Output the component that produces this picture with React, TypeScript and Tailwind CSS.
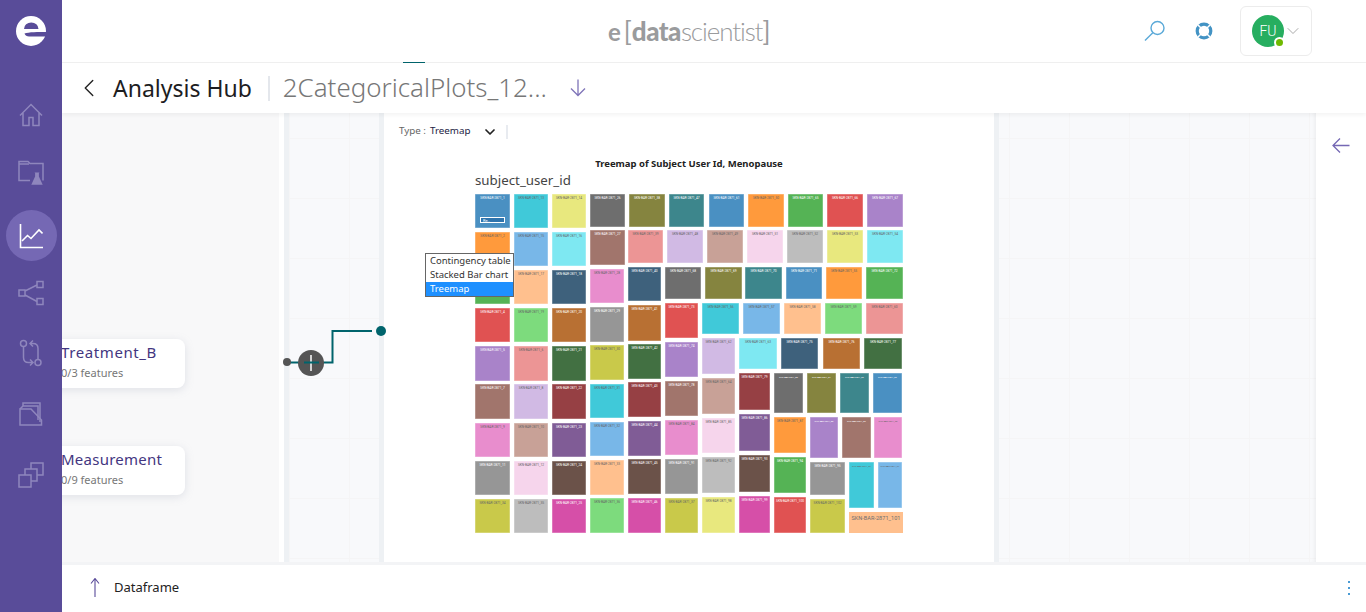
import { ChevronDown, ChevronLeft } from "lucide-react";

type Cell = [number, number, number, number, string, string];

const DARK = new Set(["#4a90c2", "#6e6e6e", "#85843f", "#3d868c", "#55b355", "#e05252", "#a983c9", "#a1756c", "#3e617c", "#b87033", "#427042", "#964044", "#805c96", "#6b5249", "#d64fa8", "#969696"]);

// x1, x2, y1, y2, colour, label suffix
const cells: Cell[] = [
  [475, 510, 194, 228, "#4a90c2", "1"], [514, 548, 194, 228, "#40c9d9", "13"], [552, 586, 194, 228, "#e8e87e", "14"], [590, 625, 194, 227, "#6e6e6e", "26"], [629, 665, 194, 227, "#85843f", "38"],
  [669, 704, 194, 227, "#3d868c", "47"], [709, 744, 194, 227, "#4a90c2", "61"], [748, 784, 194, 227, "#ff9a3c", "50"], [788, 823, 194, 227, "#55b355", "65"], [827, 863, 194, 227, "#e05252", "66"], [867, 903, 194, 227, "#a983c9", "67"],
  [475, 510, 232, 266, "#ff9a3c", "2"], [514, 548, 232, 266, "#78b7e8", "15"], [552, 586, 232, 266, "#7ee8f2", "16"], [590, 625, 230, 265, "#a1756c", "27"], [628, 663, 230, 263, "#ec9595", "39"],
  [667, 703, 230, 263, "#d1bae4", "48"], [707, 743, 230, 263, "#c8a197", "49"], [747, 783, 230, 263, "#f6d5ec", "51"], [787, 823, 230, 263, "#bdbdbd", "52"], [827, 863, 230, 263, "#e8e87e", "53"], [867, 903, 230, 263, "#7ee8f2", "54"],
  [475, 510, 270, 304, "#55b355", "3"], [514, 548, 270, 304, "#ffc08e", "17"], [552, 586, 270, 304, "#3e617c", "18"], [590, 624, 269, 303, "#e88dcd", "28"], [628, 661, 267, 301, "#3e617c", "40"],
  [665, 701, 267, 299, "#6e6e6e", "68"], [705, 742, 267, 299, "#85843f", "69"], [745, 782, 267, 299, "#3d868c", "70"], [786, 822, 267, 299, "#4a90c2", "71"], [826, 862, 267, 299, "#ff9a3c", "55"], [866, 903, 267, 299, "#55b355", "72"],
  [475, 510, 308, 342, "#e05252", "4"], [514, 548, 308, 342, "#7ddb7d", "19"], [552, 586, 308, 342, "#b87033", "20"], [590, 624, 307, 342, "#969696", "29"], [628, 661, 305, 341, "#b87033", "41"],
  [665, 698, 303, 338, "#e05252", "73"], [702, 739, 303, 334, "#40c9d9", "56"], [743, 780, 303, 334, "#78b7e8", "57"], [784, 821, 303, 334, "#ffc08e", "58"], [825, 862, 303, 334, "#7ddb7d", "59"], [866, 903, 303, 334, "#ec9595", "60"],
  [475, 510, 346, 381, "#a983c9", "5"], [514, 548, 346, 381, "#ec9595", "6"], [552, 586, 346, 381, "#427042", "21"], [590, 624, 345, 380, "#c9c94a", "30"], [628, 661, 344, 379, "#427042", "42"],
  [665, 698, 342, 377, "#a983c9", "74"], [702, 735, 338, 374, "#d1bae4", "62"], [739, 777, 338, 369, "#7ee8f2", "63"], [781, 818, 338, 369, "#3e617c", "75"], [823, 860, 338, 369, "#b87033", "76"], [864, 902, 338, 369, "#427042", "77"],
  [475, 510, 384, 419, "#a1756c", "7"], [514, 548, 384, 419, "#d1bae4", "8"], [552, 586, 384, 419, "#964044", "22"], [590, 624, 384, 418, "#40c9d9", "31"], [628, 661, 382, 417, "#964044", "43"],
  [665, 698, 381, 416, "#a1756c", "78"], [702, 735, 378, 414, "#c8a197", "64"], [739, 770, 373, 410, "#964044", "79"], [774, 803, 373, 413, "#6e6e6e", "80"], [807, 836, 373, 413, "#85843f", "81"], [840, 869, 373, 413, "#3d868c", "82"], [873, 902, 373, 413, "#4a90c2", "83"],
  [475, 510, 423, 457, "#e88dcd", "9"], [514, 548, 423, 457, "#c8a197", "10"], [552, 586, 423, 457, "#805c96", "23"], [590, 624, 422, 456, "#78b7e8", "32"], [628, 661, 421, 456, "#805c96", "44"],
  [665, 698, 420, 455, "#e88dcd", "84"], [702, 735, 418, 453, "#f6d5ec", "85"], [739, 770, 414, 451, "#805c96", "86"], [774, 806, 417, 453, "#ff9a3c", "87"], [810, 838, 417, 458, "#a983c9", "88"], [842, 871, 417, 458, "#a1756c", "89"], [874, 902, 417, 458, "#e88dcd", "90"],
  [475, 510, 461, 495, "#969696", "11"], [514, 548, 461, 495, "#f6d5ec", "12"], [552, 586, 461, 495, "#6b5249", "24"], [590, 624, 460, 495, "#ffc08e", "33"], [628, 661, 459, 494, "#6b5249", "45"],
  [665, 698, 459, 494, "#969696", "91"], [702, 735, 457, 493, "#bdbdbd", "92"], [739, 770, 455, 492, "#6b5249", "93"], [774, 806, 457, 493, "#55b355", "94"], [810, 845, 462, 495, "#969696", "95"], [849, 874, 462, 508, "#40c9d9", "96"], [878, 902, 462, 508, "#78b7e8", "97"],
  [475, 510, 499, 533, "#c9c94a", "34"], [514, 548, 499, 533, "#bdbdbd", "35"], [552, 586, 499, 533, "#d64fa8", "25"], [590, 624, 498, 533, "#7ddb7d", "36"], [628, 661, 498, 533, "#d64fa8", "46"],
  [665, 698, 498, 533, "#c9c94a", "37"], [702, 735, 497, 533, "#e8e87e", "98"], [739, 770, 496, 533, "#d64fa8", "99"], [774, 806, 497, 533, "#e05252", "100"], [810, 845, 499, 533, "#c9c94a", "102"],
];

function Treemap() {
  return (
    <svg width="429" height="340" viewBox="475 194 429 340" className="block">
      {cells.map(([x1, x2, y1, y2, fill, id]) => (
        <g key={id}>
          <rect x={x1} y={y1} width={x2 - x1} height={y2 - y1} fill={fill} stroke="#ffffff" strokeOpacity="0.45" strokeWidth="1" />
          {id !== "3" && (
            <text x={(x1 + x2) / 2} y={y1 + 4.5} textAnchor="middle" fontSize={x2 - x1 < 30 ? 2.3 : 3.2} fontFamily="Roboto, sans-serif" fill={DARK.has(fill) ? "#ffffff" : "#666666"}>
              SKN-BAR-2871_{id}
            </text>
          )}
        </g>
      ))}
      <rect x="849" y="512" width="54" height="21" fill="#ffc08e" />
      <text x="876" y="519.5" textAnchor="middle" fontSize="5.6" fontFamily="Roboto, sans-serif" fill="#6f6f6f">SKN-BAR-2871_101</text>
      <rect x="480.5" y="217.5" width="24" height="5" fill="#2f74ad" stroke="#ffffff" />
      <text x="483" y="222" fontSize="4" fontFamily="Roboto, sans-serif" fill="#ffffff">Re..</text>
    </svg>
  );
}

const iconCls = "stroke-[#8f86bd] fill-none";

function NavIcons() {
  return (
    <div className="flex flex-col items-center">
      <button className="flex h-[58px] w-[51px] items-center justify-center">
        <svg width="24" height="24" viewBox="0 0 24 24" className={iconCls} strokeWidth="1.5">
          <path d="M1 12.5 12 1.5 23 12.5M4 10v12.5h6v-8h4v8h6V10" />
        </svg>
      </button>
      <button className="flex h-[58px] w-[51px] items-center justify-center">
        <svg width="26" height="26" viewBox="0 0 26 26" className={iconCls} strokeWidth="1.5">
          <path d="M12 20.5H1V1.5h9l2 2h13v17" />
          <path d="M1 4h10" />
          <path d="M16.5 12.5h5l-.6.8v3.2l3.8 8.2H13.300l3.800-8.200v-3.200z" fill="#8f86bd" stroke="none" />
        </svg>
      </button>
      <button className="mt-[8px] flex h-[51px] w-[51px] items-center justify-center rounded-full bg-[#7568b4]">
        <svg width="24" height="26" viewBox="0 0 24 26" className="fill-none stroke-white" strokeWidth="1.6">
          <path d="M1.5 1v23.5H24" />
          <path d="M3 18l5.5-5.5 3.5 3L20 7l3.5 3.5" />
        </svg>
      </button>
      <button className="mt-[2px] flex h-[60px] w-[51px] items-center justify-center">
        <svg width="26" height="26" viewBox="0 0 26 26" className={iconCls} strokeWidth="1.5">
          <rect x="1" y="10" width="6" height="6" />
          <rect x="19" y="1.5" width="6" height="6" />
          <rect x="19" y="18.5" width="6" height="6" />
          <path d="M7 11 19 5M7 15l12 6.5" />
        </svg>
      </button>
      <button className="flex h-[60px] w-[51px] items-center justify-center">
        <svg width="24" height="28" viewBox="0 0 24 28" className={iconCls} strokeWidth="1.5">
          <circle cx="4.5" cy="4.5" r="3" />
          <circle cx="19" cy="23.5" r="3" />
          <path d="M4.5 7.5v11c0 3 1.5 5 5 5h4M11 20.5l3 3-3 3" />
          <path d="M19 20.5v-11c0-3-1.500-5-5-5h-3M14 1.500l-3 3 3 3" />
        </svg>
      </button>
      <button className="flex h-[61px] w-[51px] items-center justify-center">
        <svg width="24" height="24" viewBox="0 0 24 24" className={iconCls} strokeWidth="1.5">
          <path d="M1 7h11l10.5 11v5H1z" />
          <path d="M1 7l3-3h15v14M4 4V1h17v19" />
        </svg>
      </button>
      <button className="flex h-[61px] w-[51px] items-center justify-center">
        <svg width="26" height="26" viewBox="0 0 26 26" className={iconCls} strokeWidth="1.5">
          <rect x="1" y="13" width="12" height="12" />
          <path d="M7 13V7h12v12h-6" />
          <path d="M13 7V1h12v12h-6" />
        </svg>
      </button>
    </div>
  );
}

function Sidebar() {
  return (
    <aside className="relative z-20 flex h-[612px] w-[62px] shrink-0 flex-col items-center bg-[#594c99]">
      <div className="flex h-[86px] w-full items-start justify-center pt-4">
        <svg width="30" height="30" viewBox="0 0 30 30">
          <circle cx="15" cy="15" r="15" fill="#ffffff" />
          <path d="M8 13a7.2 6.5 0 0 1 14.5 0z" fill="#594c99" />
          <path d="M8.5 17.5c4-1.5 14-1.5 21.5-1.5v4.5H13c-2 0-4-1-4.5-3z" fill="#594c99" />
        </svg>
      </div>
      <NavIcons />
    </aside>
  );
}

function TopBar() {
  return (
    <header className="relative z-10 flex h-[63px] shrink-0 items-center border-b border-[#f0f0f0] bg-white">
      <div className="absolute bottom-[-1px] left-[341px] h-px w-[22px] bg-[#00646c]" />
      <div className="ml-[546px] flex w-[160px] items-baseline whitespace-nowrap font-['Lato',sans-serif] text-[26px] leading-none text-[#9a9b9d]">
        <span className="text-[24px] font-bold">e</span>
        <span className="ml-[3px] font-normal">[</span>
        <span className="font-black tracking-[-0.5px]">data</span>
        <span className="font-light tracking-[-1.1px]">scientist</span>
        <span className="font-normal">]</span>
      </div>
      <svg width="22" height="22" viewBox="0 0 22 22" className="ml-[376px] fill-none stroke-[#5aa9d8]" strokeWidth="1.4">
        <circle cx="13.5" cy="8" r="6.5" />
        <path d="M8.8 12.8 1 20.5" />
      </svg>
      <svg width="18" height="18" viewBox="0 0 18 18" className="ml-[29px] fill-none stroke-[#4393c4]">
        <circle cx="9" cy="9" r="6.8" strokeWidth="3.2" />
        <path d="M3 3 6 6M15 3 12 6M3 15 6 12M15 15 12 12" stroke="#ffffff" strokeWidth="1.5" />
      </svg>
      <div className="ml-[27px] flex h-[50px] w-[72px] items-center rounded-md border border-[#ececec] pl-[11px]">
        <div className="relative flex h-8 w-8 items-center justify-center rounded-full bg-[#27ae60] font-['Roboto',sans-serif] text-sm font-light text-white">
          FU
          <span className="absolute bottom-[-1px] right-[-1px] h-[11px] w-[11px] rounded-full border-2 border-white bg-[#6fb900]" />
        </div>
        <ChevronDown size={20} strokeWidth={1} className="ml-[-1px] text-[#999999]" />
      </div>
    </header>
  );
}

function SubBar() {
  return (
    <div className="relative z-10 flex h-[50px] shrink-0 items-center bg-white shadow-[0_2px_4px_rgba(0,0,0,0.05)]">
      <ChevronLeft size={30} strokeWidth={1.1} className="ml-[12px] text-[#222222]" />
      <h1 className="ml-[9px] font-['Noto_Sans',sans-serif] text-[23px] leading-none text-[#1d1d1f]">Analysis Hub</h1>
      <div className="ml-[16px] h-[25px] w-[2px] bg-[#e4e7ec]" />
      <span className="ml-[13px] font-['Noto_Sans',sans-serif] text-[25.9px] font-light leading-none text-[#777777]">2CategoricalPlots_12...</span>
      <svg width="16" height="18" viewBox="0 0 16 18" className="ml-[23px] fill-none stroke-[#7f74b8]" strokeWidth="1.3">
        <path d="M8 0.5V16.5M1 9.5l7 7 7-7" />
      </svg>
    </div>
  );
}

function NodeCard({ title, sub, tracking }: { title: string; sub: string; tracking: string }) {
  return (
    <div className="ml-[-20px] flex h-[49px] w-[143px] flex-col rounded-lg bg-white pl-[19px] pt-[3px] shadow-[0_2px_8px_rgba(150,160,180,0.25)]">
      <div className={`font-['Noto_Sans',sans-serif] text-[15px] leading-[20px] text-[#43367f] ${tracking}`}>{title}</div>
      <div className="mt-[3px] font-['Noto_Sans',sans-serif] text-[11px] leading-[16px] text-[#777777]">{sub}</div>
    </div>
  );
}

const grid = "bg-[#f8f9fb] bg-[linear-gradient(to_right,#f5f5f6_1px,transparent_1px),linear-gradient(to_bottom,#f5f5f6_1px,transparent_1px)] bg-[size:60px_60px]";

function Workspace() {
  return (
    <main className="flex min-h-0 flex-1">
      <div className="flex w-[217px] shrink-0 flex-col gap-[58px] bg-[#f8f8f9] pt-[226px]">
        <NodeCard title="Treatment_B" sub="0/3 features" tracking="tracking-[0.6px]" />
        <NodeCard title="Measurement" sub="0/9 features" tracking="tracking-[0.25px]" />
      </div>
      <div className="w-[5px] shrink-0 bg-white" />
      <div className={`relative w-[100px] shrink-0 border-x-[5px] border-[#eef1f4] ${grid} bg-[position:0px_25px]`}>
        <svg width="110" height="60" viewBox="0 0 110 60" className="absolute left-[-7px] top-[205px] z-10 overflow-visible">
          <path d="M8 44.5H50.5V13H90" fill="none" stroke="#00646c" strokeWidth="2" />
          <circle cx="5" cy="44" r="4" fill="#555555" />
          <circle cx="29" cy="45" r="13" fill="#555555" />
          <path d="M29 37v16" stroke="#ffffff" strokeWidth="1.5" />
          <path d="M22 44.5h15" stroke="#00646c" strokeWidth="2" />
          <circle cx="99" cy="13" r="5" fill="#00646c" />
        </svg>
      </div>
      <section className="relative w-[610px] shrink-0 bg-white">
        <div className="flex h-[36px] items-center pl-[15px] pt-[1px] font-['Noto_Sans',sans-serif] text-[9.8px]">
          <span className="text-[#666666]">Type :</span>
          <span className="ml-[4px] text-[#222244]">Treemap</span>
          <ChevronDown size={16} strokeWidth={2.6} className="ml-[11px] text-[#222222]" />
          <div className="ml-[8px] h-[14px] w-[2px] bg-[#e8ebf0]" />
        </div>
        <h2 className="mt-[8px] text-center font-['Noto_Sans',sans-serif] text-[9.5px] font-bold leading-[14px] text-[#222222]">
          Treemap of Subject User Id, Menopause
        </h2>
        <div className="ml-[91px] mt-[-1px] font-['Noto_Sans',sans-serif] text-[13.3px] leading-[20px] text-[#444444]">subject_user_id</div>
        <div className="ml-[91px] mt-[4px]">
          <Treemap />
        </div>
        <ul className="absolute left-[41px] top-[140px] z-10 w-[89px] border border-[#666666] bg-white font-['Noto_Sans',sans-serif] text-[9.5px] leading-[14px] text-[#333333]">
          <li className="pl-[4px]">Contingency table</li>
          <li className="pl-[4px]">Stacked Bar chart</li>
          <li className="bg-[#1e90ff] pl-[4px] text-white">Treemap</li>
        </ul>
      </section>
      <div className={`w-[322px] shrink-0 border-l-[5px] border-[#eef1f4] ${grid} bg-[position:10px_25px] shadow-[inset_-4px_0_4px_-3px_rgba(0,0,0,0.06)]`} />
      <div className="flex flex-1 justify-center bg-white pt-[25px]">
        <svg width="18" height="15" viewBox="0 0 18 15" className="fill-none stroke-[#7568b4]" strokeWidth="1.3">
          <path d="M17.5 7.5H1M8 0.5l-7 7 7 7" />
        </svg>
      </div>
    </main>
  );
}

function Footer() {
  return (
    <footer className="flex h-[50px] shrink-0 items-center border-t-[3px] border-[#f3f4f6] bg-white pb-[2px] pl-[28px] pr-[16px]">
      <svg width="10" height="19" viewBox="0 0 10 19" className="fill-none stroke-[#5a4b9a]" strokeWidth="1.1">
        <path d="M5 0.5V19M1 5.5l4-5 4 5" />
      </svg>
      <span className="ml-[14px] font-['Noto_Sans',sans-serif] text-[13px] text-[#222222]">Dataframe</span>
      <div className="ml-auto flex flex-col gap-1">
        <span className="h-[2px] w-[2px] bg-[#4a9bd4]" />
        <span className="h-[2px] w-[2px] bg-[#4a9bd4]" />
        <span className="h-[2px] w-[2px] bg-[#4a9bd4]" />
      </div>
    </footer>
  );
}

export default function App() {
  return (
    <div className="flex h-[612px] w-[1366px] overflow-hidden bg-white">
      <Sidebar />
      <div className="flex min-w-0 flex-1 flex-col">
        <TopBar />
        <SubBar />
        <Workspace />
        <Footer />
      </div>
    </div>
  );
}
